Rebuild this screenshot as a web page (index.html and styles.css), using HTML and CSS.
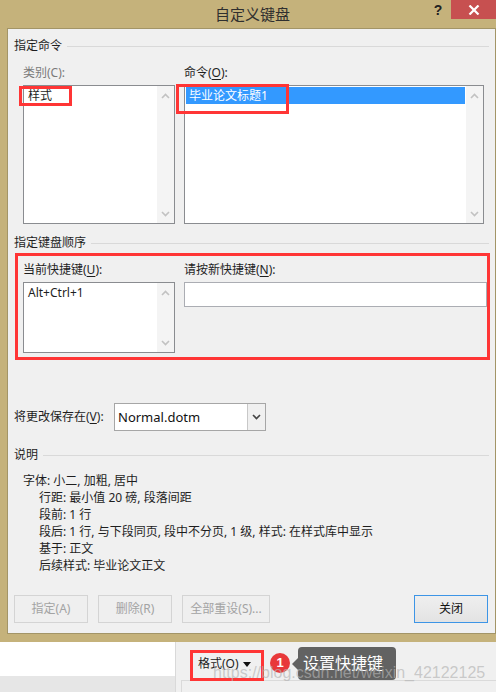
FILE: index.html
```html
<!DOCTYPE html>
<html lang="zh-CN">
<head>
<meta charset="utf-8">
<title>自定义键盘</title>
<link rel="stylesheet" href="styles.css">
</head>
<body>
<div class="window">
  <div class="titlebar">
    <div class="title">自定义键盘</div>
    <div class="help">?</div>
    <div class="close"><svg width="12" height="10" viewBox="0 0 12 10"><path d="M1.5 0.5 L10.5 9.5 M10.5 0.5 L1.5 9.5" stroke="#fff" stroke-width="2.2"/></svg></div>
  </div>
  <div class="panel">
    <div class="gh">指定命令</div>
    <div class="cols cols-top">
      <div class="col col-l">
        <div class="lbl dim">类别(C):</div>
        <div class="list tall">
          <div class="items"><div class="item">样式</div></div>
          <div class="sb">
            <svg width="9" height="6" viewBox="0 0 9 6"><path d="M1 5 L4.5 1.5 L8 5" fill="none" stroke="#c2c2c2" stroke-width="1.6"/></svg>
            <svg width="9" height="6" viewBox="0 0 9 6"><path d="M1 1 L4.5 4.5 L8 1" fill="none" stroke="#c2c2c2" stroke-width="1.6"/></svg>
          </div>
        </div>
      </div>
      <div class="col col-r">
        <div class="lbl">命令(<u>O</u>):</div>
        <div class="list tall">
          <div class="items"><div class="item sel">毕业论文标题1</div></div>
          <div class="sb">
            <svg width="9" height="6" viewBox="0 0 9 6"><path d="M1 5 L4.5 1.5 L8 5" fill="none" stroke="#c2c2c2" stroke-width="1.6"/></svg>
            <svg width="9" height="6" viewBox="0 0 9 6"><path d="M1 1 L4.5 4.5 L8 1" fill="none" stroke="#c2c2c2" stroke-width="1.6"/></svg>
          </div>
        </div>
      </div>
    </div>

    <div class="gh gh2">指定键盘顺序</div>
    <div class="cols cols-keys">
      <div class="col col-l">
        <div class="lbl">当前快捷键(<u>U</u>):</div>
        <div class="list short">
          <div class="items"><div class="item">Alt+Ctrl+1</div></div>
          <div class="sb">
            <svg width="9" height="6" viewBox="0 0 9 6"><path d="M1 5 L4.5 1.5 L8 5" fill="none" stroke="#c2c2c2" stroke-width="1.6"/></svg>
            <svg width="9" height="6" viewBox="0 0 9 6"><path d="M1 1 L4.5 4.5 L8 1" fill="none" stroke="#c2c2c2" stroke-width="1.6"/></svg>
          </div>
        </div>
      </div>
      <div class="col col-r">
        <div class="lbl">请按新快捷键(<u>N</u>):</div>
        <div class="input"></div>
      </div>
    </div>

    <div class="save-row">
      <div class="save-lbl">将更改保存在(<u>V</u>):</div>
      <div class="combo">
        <div class="combo-val">Normal.dotm</div>
        <div class="combo-btn"><svg width="9" height="6" viewBox="0 0 9 6"><path d="M1 1 L4.5 4.5 L8 1" fill="none" stroke="#444" stroke-width="1.6"/></svg></div>
      </div>
    </div>

    <div class="gh gh3">说明</div>
    <div class="desc">
      <div>字体: 小二, 加粗, 居中</div>
      <div class="ind">行距: 最小值 20 磅, 段落间距</div>
      <div class="ind">段前: 1 行</div>
      <div class="ind">段后: 1 行, 与下段同页, 段中不分页, 1 级, 样式: 在样式库中显示</div>
      <div class="ind">基于: 正文</div>
      <div class="ind">后续样式: 毕业论文正文</div>
    </div>

    <div class="buttons">
      <div class="btn dis">指定(A)</div>
      <div class="btn dis">删除(R)</div>
      <div class="btn dis wide">全部重设(S)...</div>
      <div class="btn def">关闭</div>
    </div>
  </div>
</div>

<div class="below">
  <div class="doc"><div class="doc-page"></div></div>
  <div class="ribbon">
    <div class="fmt">格式(O) <span class="caret"></span></div>
    <div class="ribbon-foot"></div>
  </div>
</div>

<div class="mark m1"></div>
<div class="mark m2"></div>
<div class="mark m3"></div>
<div class="mark m4"></div>
<div class="badge">1</div>
<div class="tip">设置快捷键</div>
<div class="wm">https://blog.csdn.net/weixin_42122125</div>
</body>
</html>
```

FILE: styles.css
```css
* { box-sizing: border-box; }
html, body { margin: 0; padding: 0; }
body {
  width: 496px;
  height: 692px;
  overflow: hidden;
  position: relative;
  background: #e6e6e6;
  font-family: "Noto Sans", "Noto Sans CJK SC", sans-serif;
  font-size: 12px;
  line-height: 16px;
  color: #1e1e1e;
}
u { text-decoration: underline; text-underline-offset: 2px; }

.window {
  background: #c5b27b;
  padding: 0 0 8px 7px;
}
.titlebar {
  height: 28px;
  display: flex;
  align-items: flex-start;
}
.title {
  flex: 1;
  padding-left: 73px;
  text-align: center;
  font-size: 15px;
  line-height: 28px;
  color: #2f2f2f;
}
.help {
  width: 26px;
  text-align: center;
  font-family: "Liberation Sans", sans-serif;
  font-weight: bold;
  font-size: 14px;
  line-height: 20px;
  color: #222;
}
.close {
  width: 45px;
  height: 19px;
  background: #c75050;
  display: flex;
  align-items: center;
  justify-content: center;
}

.panel {
  background: #f0f0f0;
  border: 1px solid #a39567;
  padding: 0 6px 10px 6px;
}
.gh {
  display: flex;
  align-items: center;
  margin-top: 9px;
  height: 16px;
}
.gh::after {
  content: "";
  flex: 1;
  height: 1px;
  background: #d9d9d9;
  margin-left: 5px;
}
.gh2 { margin-top: 11px; }
.gh3 { margin-top: 16px; }

.cols {
  display: flex;
  gap: 9px;
  margin-left: 9px;
  margin-top: 11px;
}
.col-l { width: 152px; }
.col-r { width: 303px; }
.lbl { height: 16px; }
.dim { color: #7a7a7a; }

.list {
  margin-top: 4px;
  background: #fff;
  border: 1px solid #8a8c90;
  display: flex;
}
.col-r .list { width: 300px; }
.list.tall { height: 139px; }
.list.short { height: 71px; }
.items { flex: 1; padding: 1px; }
.item { height: 17px; line-height: 17px; padding-left: 3px; }
.item.sel { background: #3399ff; color: #fff; }
.sb {
  width: 17px;
  background: #f4f4f4;
  display: flex;
  flex-direction: column;
  justify-content: space-between;
  align-items: center;
  padding: 7px 0 6px;
}
.input {
  margin-top: 4px;
  height: 25px;
  background: #fff;
  border: 1px solid #abadb3;
}

.save-row {
  display: flex;
  align-items: center;
  margin-top: 50px;
  height: 28px;
}
.save-lbl { width: 100px; }
.combo {
  width: 152px;
  height: 28px;
  border: 1px solid #a6a6a6;
  background: #fff;
  display: flex;
}
.combo-val {
  flex: 1;
  padding-left: 3px;
  font-size: 13px;
  line-height: 26px;
  color: #111;
}
.combo-btn {
  width: 18px;
  background: #f0f0f0;
  border-left: 1px solid #c8c8c8;
  display: flex;
  align-items: center;
  justify-content: center;
}

.desc {
  margin-top: 9px;
  margin-left: 9px;
  line-height: 17px;
}
.desc .ind { padding-left: 16px; }

.buttons {
  display: flex;
  gap: 10px;
  margin-top: 21px;
}
.btn {
  width: 74px;
  height: 28px;
  border: 1px solid #d4d4d4;
  background: #efefef;
  text-align: center;
  line-height: 26px;
}
.btn.wide { width: 88px; }
.btn.dis { color: #a3a3a3; }
.btn.def {
  margin-left: auto;
  margin-right: 1px;
  border-color: #3d95e6;
  background: linear-gradient(#efefef, #e3e3e3);
  color: #111;
}

.below {
  display: flex;
  height: 50px;
}
.doc { width: 175px; }
.doc-page { height: 34px; background: #fff; }
.ribbon {
  flex: 1;
  background: #f0f0f0;
  border-left: 1px solid #d9d9d9;
  padding-top: 14px;
}
.fmt {
  margin-left: 22px;
  height: 16px;
  display: flex;
  align-items: center;
  gap: 4px;
  color: #222;
}
.caret {
  width: 0;
  height: 0;
  border-left: 4px solid transparent;
  border-right: 4px solid transparent;
  border-top: 5px solid #111;
}
.ribbon-foot {
  margin-top: 8px;
  margin-left: 5px;
  height: 12px;
  border-top: 1px solid #dadada;
  border-left: 1px solid #dadada;
}

.mark {
  position: absolute;
  border: 3px solid #ff3535;
}
.m1 { left: 19px; top: 86px; width: 53px; height: 20px; }
.m2 { left: 176px; top: 84px; width: 113px; height: 30px; }
.m3 { left: 15px; top: 253px; width: 475px; height: 107px; }
.m4 { left: 190px; top: 650px; width: 74px; height: 31px; }

.badge {
  position: absolute;
  left: 270px;
  top: 653px;
  width: 20px;
  height: 20px;
  border-radius: 50%;
  background: #e8393a;
  color: #fff;
  font-family: "Liberation Sans", sans-serif;
  font-weight: bold;
  font-size: 13px;
  line-height: 20px;
  text-align: center;
}
.tip {
  position: absolute;
  left: 298px;
  top: 647px;
  width: 98px;
  height: 33px;
  border-radius: 4px;
  background: #626262;
  color: #fff;
  font-size: 16px;
  line-height: 33px;
  padding-left: 5px;
}
.tip::before {
  content: "";
  position: absolute;
  left: -6px;
  top: 11px;
  border-top: 6px solid transparent;
  border-bottom: 6px solid transparent;
  border-right: 6px solid #626262;
}
.wm {
  position: absolute;
  left: 213px;
  top: 664px;
  font-family: "Liberation Sans", sans-serif;
  font-size: 16px;
  line-height: 18px;
  color: rgba(178, 178, 178, 0.65);
  white-space: nowrap;
}
```
